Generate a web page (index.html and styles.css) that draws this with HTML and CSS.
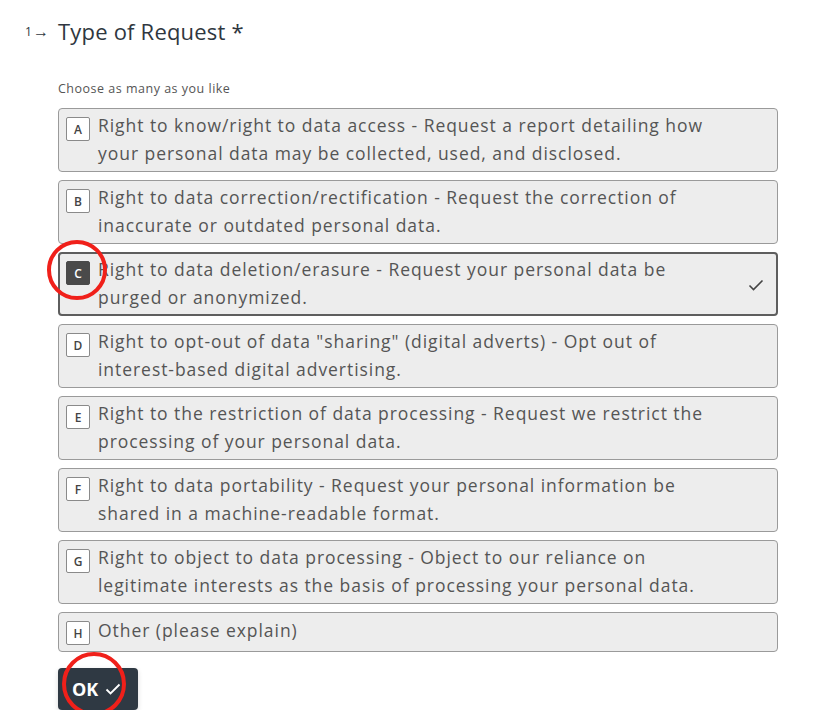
FILE: index.html
```html
<!DOCTYPE html>
<html>
<head>
<meta charset="utf-8">
<link rel="stylesheet" href="styles.css">
</head>
<body>
<div class="page">
  <div class="question">
    <div class="qnum">1<span class="arrow">&#x2192;</span></div>
    <h1 class="qtitle">Type of Request *</h1>
  </div>
  <div class="body">
    <p class="hint">Choose as many as you like</p>
    <div class="choices">
      <div class="choice"><span class="key">A</span><span class="label">Right to know/right to data access - Request a report detailing how your personal data may be collected, used, and disclosed.</span></div>
      <div class="choice"><span class="key">B</span><span class="label">Right to data correction/rectification - Request the correction of inaccurate or outdated personal data.</span></div>
      <div class="choice selected"><span class="key">C</span><span class="label">Right to data deletion/erasure - Request your personal data be purged or anonymized.</span>
        <svg class="tick" width="16" height="12" viewBox="0 0 16 12"><path d="M1.5 6.5 L5.5 10.5 L14.5 1.5" fill="none" stroke="#444" stroke-width="1.6"/></svg>
        <span class="ring ring-c"></span>
      </div>
      <div class="choice"><span class="key">D</span><span class="label">Right to opt-out of data "sharing" (digital adverts) - Opt out of interest-based digital advertising.</span></div>
      <div class="choice"><span class="key">E</span><span class="label">Right to the restriction of data processing - Request we restrict the processing of your personal data.</span></div>
      <div class="choice"><span class="key">F</span><span class="label">Right to data portability - Request your personal information be shared in a machine-readable format.</span></div>
      <div class="choice"><span class="key">G</span><span class="label">Right to object to data processing - Object to our reliance on legitimate interests as the basis of processing your personal data.</span></div>
      <div class="choice single"><span class="key">H</span><span class="label">Other (please explain)</span></div>
    </div>
    <div class="actions">
      <button class="ok">OK <svg width="16" height="12" viewBox="0 0 16 12"><path d="M1.5 6.5 L5.5 10.5 L14.5 1.5" fill="none" stroke="#fff" stroke-width="1.8"/></svg></button>
      <span class="ring ring-ok"></span>
    </div>
  </div>
</div>
</body>
</html>
```
FILE: styles.css
```css
* { box-sizing: border-box; }
html, body { margin: 0; padding: 0; background: #fff; }
body { font-family: "Open Sans", "Noto Sans", sans-serif; color: #4f4f4f; }
.page { padding: 15px 49px 0 0; width: 827px; }
.question { display: flex; align-items: center; height: 32px; }
.qnum { width: 58px; padding-left: 25px; font-size: 12px; color: #2f3740; display: flex; align-items: center; }
.arrow { font-size: 16px; margin-left: 1px; font-weight: 700; line-height: 12px; }
.qtitle { margin: 0; font-size: 22px; font-weight: 400; color: #2f3740; letter-spacing: 0.2px; }
.body { padding-left: 58px; }
.hint { margin: 34px 0 11px; font-size: 12.5px; letter-spacing: 0.5px; color: #555; line-height: 16px; }
.choices { display: flex; flex-direction: column; gap: 8px; width: 720px; }
.choice { position: relative; display: flex; align-items: flex-start; background: #ededed; border: 1px solid #9a9a9a; border-radius: 4px; padding: 2px 40px 4px 7px; min-height: 64px; }
.choice.single { min-height: 40px; padding-top: 3px; }
.choice.selected { border: 2px solid #5e5e5e; padding: 1px 90px 3px 6px; }
.key { flex: none; width: 24px; height: 24px; border: 1px solid #8a8a8a; background: #fff; border-radius: 2px; font-size: 12px; font-weight: 600; color: #444; letter-spacing: 0; display: flex; align-items: center; justify-content: center; margin-right: 8px; margin-top: 6px; }
.single .key { margin-top: 5px; }
.selected .key { background: #4a4a4a; border-color: #4a4a4a; color: #fff; }
.label { font-size: 17.5px; line-height: 28px; color: #555; letter-spacing: 0.95px; }
.tick { position: absolute; right: 12px; top: 25px; }
.ring { position: absolute; border: 4px solid #f0201a; border-radius: 50%; pointer-events: none; }
.ring-c { width: 60px; height: 60px; left: -13px; top: -14px; }
.actions { position: relative; margin-top: 16px; }
.ok { display: flex; align-items: center; gap: 7px; height: 42px; width: 80px; padding: 0 0 0 14px; background: #2f3943; color: #fff; border: none; border-radius: 4px; font-family: "Open Sans", sans-serif; font-weight: 700; font-size: 18px; box-shadow: 0 2px 5px rgba(0,0,0,0.15); }
.ring-ok { width: 64px; height: 64px; left: 4px; top: -16px; }
```
